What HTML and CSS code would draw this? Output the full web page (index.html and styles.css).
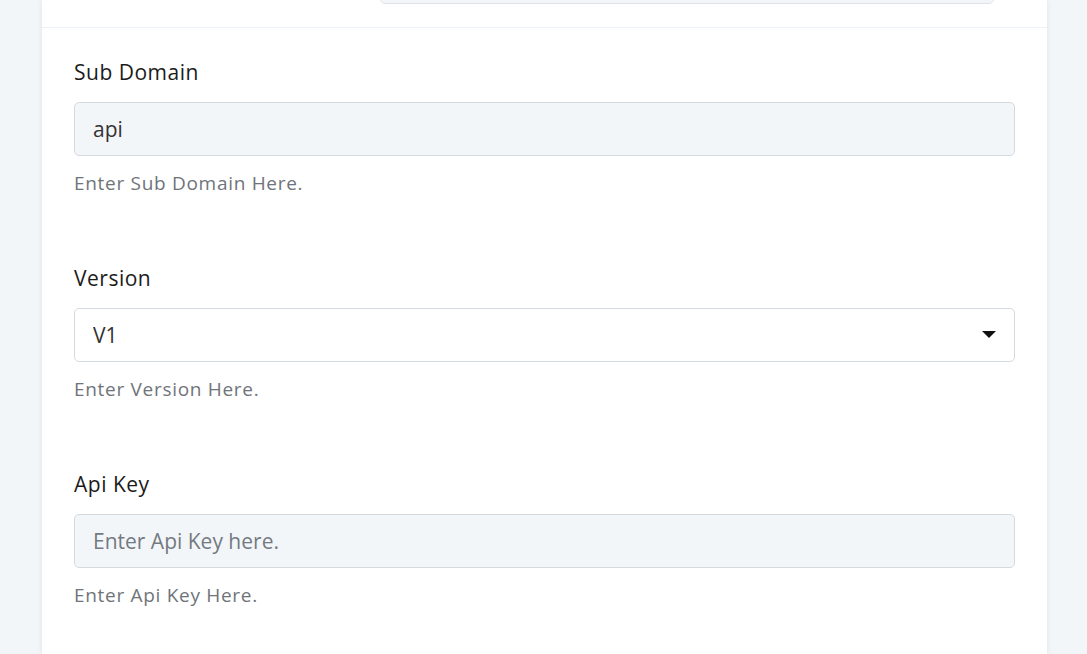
FILE: index.html
```html
<!DOCTYPE html>
<html lang="en">
<head>
    <meta charset="UTF-8">
    <meta name="viewport" content="width=device-width, initial-scale=1.0">
    <title>Connection Settings</title>
    <link rel="stylesheet" href="styles.css">
</head>
<body>
    <div class="page">
        <div class="card">
            <div class="card-top">
                <div class="top-field"></div>
            </div>

            <div class="card-body">
                <div class="field">
                    <label for="subDomain">Sub Domain</label>
                    <input type="text" id="subDomain" class="input" value="api">
                    <p class="help">Enter Sub Domain Here.</p>
                </div>

                <div class="field">
                    <label for="version">Version</label>
                    <div class="select-wrap">
                        <select id="version" class="input select">
                            <option>V1</option>
                            <option>V2</option>
                        </select>
                        <svg class="caret" width="14" height="8" viewBox="0 0 14 8"><path d="M0 0 H14 L7 7 Z" fill="#111"/></svg>
                    </div>
                    <p class="help">Enter Version Here.</p>
                </div>

                <div class="field">
                    <label for="apiKey">Api Key</label>
                    <input type="text" id="apiKey" class="input" placeholder="Enter Api Key here.">
                    <p class="help">Enter Api Key Here.</p>
                </div>
            </div>
        </div>
    </div>
</body>
</html>
```

FILE: styles.css
```css
body {
    margin: 0;
    padding: 0;
    background-color: #f3f6f9;
    font-family: "Open Sans", Lato, sans-serif;
    color: #1b1b1b;
}
.page {
    padding-left: 42px;
    height: 654px;
    overflow: hidden;
}
.card {
    width: 1005px;
    min-height: 654px;
    background: white;
    box-shadow: 0 0 6px rgba(0,0,0,0.08);
}
.card-top {
    display: flex;
    justify-content: flex-end;
    padding-right: 53px;
    padding-bottom: 23px;
    border-bottom: 1px solid #edf2f8;
}
.top-field {
    box-sizing: border-box;
    width: 614px;
    height: 40px;
    margin-top: -36px;
    background: #f3f6f9;
    border: 1px solid #dfe3e8;
    border-radius: 5px;
}
.card-body {
    padding: 30px 32px 0 32px;
}
.field {
    display: flex;
    flex-direction: column;
    margin-bottom: 69px;
}
.field label {
    font-size: 21px;
    line-height: 28px;
    letter-spacing: 0.5px;
    margin-bottom: 16px;
}
.input {
    box-sizing: border-box;
    width: 941px;
    height: 54px;
    padding: 0 18px;
    font-family: inherit;
    font-size: 21px;
    color: #333;
    background: #f3f6f9;
    border: 1px solid #d5dae0;
    border-radius: 5px;
    outline: none;
}
.input::placeholder {
    color: #747a81;
}
.select-wrap {
    position: relative;
}
.select {
    appearance: none;
    background: white;
}
.caret {
    position: absolute;
    right: 19px;
    top: 23px;
    pointer-events: none;
}
.help {
    margin: 15px 0 0 0;
    font-size: 19px;
    line-height: 24px;
    letter-spacing: 0.7px;
    color: #6f747a;
}
```
